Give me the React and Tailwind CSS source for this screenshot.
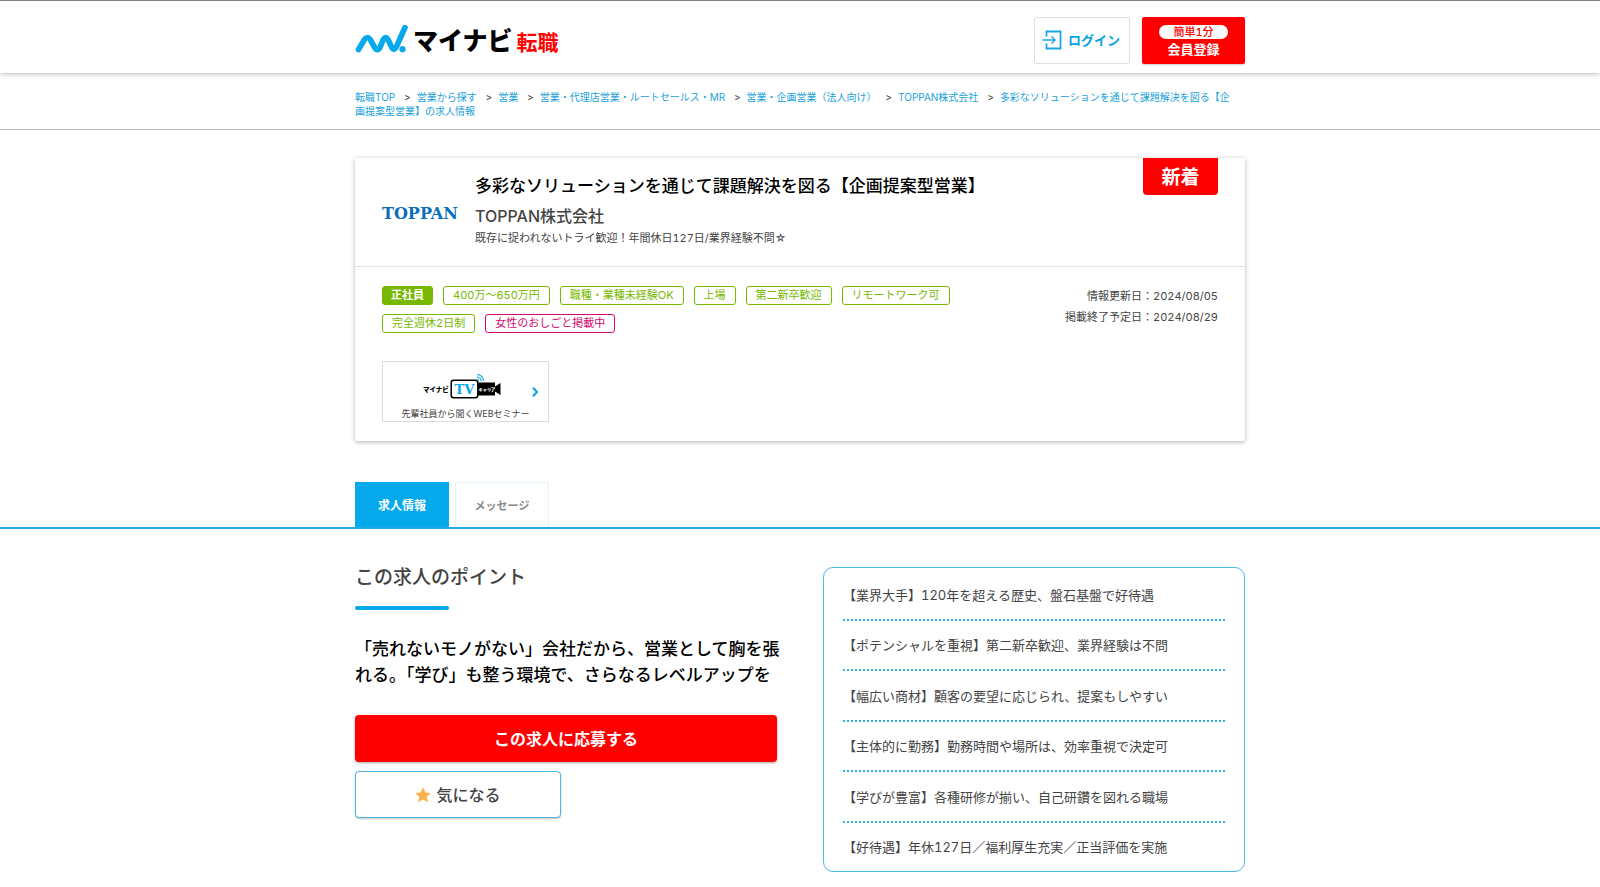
import React from "react";

const crumbs = [
  "転職TOP",
  "営業から探す",
  "営業",
  "営業・代理店営業・ルートセールス・MR",
  "営業・企画営業（法人向け）",
  "TOPPAN株式会社",
  "多彩なソリューションを通じて課題解決を図る【企画提案型営業】の求人情報",
];

const tags = ["400万～650万円", "職種・業種未経験OK", "上場", "第二新卒歓迎", "リモートワーク可", "完全週休2日制"];

const points = [
  "【業界大手】120年を超える歴史、盤石基盤で好待遇",
  "【ポテンシャルを重視】第二新卒歓迎、業界経験は不問",
  "【幅広い商材】顧客の要望に応じられ、提案もしやすい",
  "【主体的に勤務】勤務時間や場所は、効率重視で決定可",
  "【学びが豊富】各種研修が揃い、自己研鑽を図れる職場",
  "【好待遇】年休127日／福利厚生充実／正当評価を実施",
];

function Logo() {
  return (
    <a href="#" aria-label="マイナビ転職" className="flex items-center">
      <svg viewBox="0 2 54 30" className="h-[30px] w-[54px]" fill="none">
        <path
          d="M3.500 26.500L9.500 16.500Q12.500 12.500 15.200 16.500L20 25Q22.500 28.500 24.800 25L28 17Q30.500 12.500 33 16.500L37 25Q39.500 28 41.500 23.500L50 4.500"
          stroke="#08a9ec"
          strokeWidth="5.600"
          strokeLinecap="round"
          strokeLinejoin="round"
        />
        <circle cx="47.500" cy="26.200" r="3.100" fill="#08a9ec" />
      </svg>
      <span className="ml-1 pt-[2px] text-[25px] leading-8 font-black text-black">マイナビ</span>
      <span className="ml-1 pt-[6px] text-[21px] leading-7 font-bold text-[#ff0000]">転職</span>
    </a>
  );
}

function Header() {
  return (
    <header className="border-t border-[#808080] shadow-[0_1px_5px_rgba(0,0,0,0.28)]">
      <div className="mx-auto flex h-[72px] max-w-[890px] items-center justify-between pt-[6px]">
        <Logo />
        <div className="flex gap-3">
          <a href="#" className="flex h-[47px] w-[96px] items-center rounded-xs border border-[#dedede] pl-[7px] text-[13px] font-bold text-[#08a2e6]">
            <svg viewBox="0 0 20 20" className="mr-[6px] size-5" fill="none" stroke="#1ba8ea" strokeWidth="1.800">
              <path d="M4.500 6.500V1.500H18.500V18.500H4.500V13.500" />
              <path d="M0.500 10H12.500M9.500 6.500L13 10L9.500 13.500" strokeWidth="1.400" />
            </svg>
            <span className="pt-[2px]">ログイン</span>
          </a>
          <a href="#" className="flex h-[47px] w-[103px] flex-col items-center justify-center rounded-xs bg-[#ff0000] pt-[2px] text-[13px] leading-[18px] font-bold text-white shadow-[0_1px_2px_rgba(0,0,0,0.2)]">
            <span className="mb-px h-[14px] rounded-full bg-white px-[14px] text-[11px] leading-[14px] font-medium text-[#ff0000]">簡単1分</span>
            会員登録
          </a>
        </div>
      </div>
    </header>
  );
}

function Breadcrumb() {
  return (
    <nav aria-label="パンくずリスト" className="border-b border-[#bbbbbb]">
      <ol className="mx-auto max-w-[890px] pt-[17px] pr-3 pb-[11px] text-[10px] leading-[14px]">
        {crumbs.map((c, i) => (
          <li key={c} className="inline">
            {i > 0 && <span className="mr-[6px] ml-[9px] text-[#333333]">&gt;</span>}
            <a href="#" className="text-[#1a9fdb]">{c}</a>
          </li>
        ))}
      </ol>
    </nav>
  );
}

function SeminarLink() {
  return (
    <a href="#" className="relative mt-[28px] flex h-[61px] w-[167px] flex-col items-center border border-[#dcdcdc] pt-[10px] text-[9px] leading-[14px] text-[#444444]">
      <svg viewBox="0 0 86 28" className="h-[28px] w-[86px]">
        <text x="0" y="20" fontSize="6.500" fontWeight="900" fill="#000">マイナビ</text>
        <rect x="28.200" y="8.200" width="26.600" height="17.600" rx="2.500" fill="#fff" stroke="#000" strokeWidth="1.500" />
        <text x="41.500" y="21.500" fontSize="13" fontWeight="700" textAnchor="middle" fill="#08a9ec" className="font-['DejaVu_Serif',serif]">TV</text>
        <path d="M55 10.500H72V14.500L77.500 11V23L72 19.500V23.500H55Z" fill="#000" />
        <text x="55.500" y="18.500" fontSize="4.200" fontWeight="900" fill="#fff">キャリア</text>
        <g fill="none" stroke="#08a9ec" strokeWidth="1.200">
          <path d="M54 2.500A6.500 6.500 0 0 1 60.500 9M54 5A4 4 0 0 1 58 9" />
        </g>
        <circle cx="55" cy="8" r="1" fill="#08a9ec" />
      </svg>
      <span className="mt-[7px]">先輩社員から聞くWEBセミナー</span>
      <svg viewBox="0 0 6 10" className="absolute top-[25px] right-[10px] h-[10px] w-[6px]" fill="none" stroke="#08a2e6" strokeWidth="2">
        <path d="M1 0.800L5 5L1 9.200" />
      </svg>
    </a>
  );
}

function JobCard() {
  return (
    <section className="rounded-xs bg-white shadow-[0_1px_4px_rgba(0,0,0,0.32)]">
      <div className="relative flex items-center border-b border-[#e2e2e2] px-[27px] pt-[14px] pb-[19px]">
        <span className="w-[93px] shrink-0 pt-[9px] font-['DejaVu_Serif',serif] text-[16px] leading-6 font-bold text-[#0a6ebd]">TOPPAN</span>
        <div>
          <h1 className="text-[17px] leading-[28px] font-medium text-black">多彩なソリューションを通じて課題解決を図る【企画提案型営業】</h1>
          <p className="mt-[3px] text-[16px] leading-[26px] font-medium text-[#444444]">TOPPAN株式会社</p>
          <p className="text-[11px] leading-[18px] text-[#444444]">既存に捉われないトライ歓迎！年間休日127日/業界経験不問☆</p>
        </div>
        <span className="absolute top-0 right-[27px] flex h-[37px] w-[75px] items-center justify-center rounded-b-sm bg-[#ff0000] pt-[3px] text-[19px] font-bold text-white">新着</span>
      </div>
      <div className="px-[27px] pt-[19px] pb-[19px]">
        <div className="flex justify-between">
          <ul className="flex w-[600px] flex-wrap gap-x-[10px] gap-y-[9px] text-[11px] leading-[17px]">
            <li className="rounded-[3px] border border-[#76b900] bg-[#76b900] px-2 font-bold text-white">正社員</li>
            {tags.map((t) => (
              <li key={t} className="rounded-[3px] border border-[#76b900] px-[9px] text-[#76b900]">{t}</li>
            ))}
            <li className="rounded-[3px] border border-[#d9086e] px-[9px] text-[#d9086e]">女性のおしごと掲載中</li>
          </ul>
          <div className="text-right text-[11px] leading-[21px] text-[#444444]">
            <p>情報更新日：2024/08/05</p>
            <p>掲載終了予定日：2024/08/29</p>
          </div>
        </div>
        <SeminarLink />
      </div>
    </section>
  );
}

function Tabs() {
  return (
    <div className="mt-[41px] border-b-2 border-[#1aa9e6]">
      <div role="tablist" className="mx-auto flex max-w-[890px] gap-[6px] text-[12px]">
        <button role="tab" aria-selected="true" className="h-[45px] w-[94px] bg-[#05a9ec] pt-[2px] font-bold text-white">求人情報</button>
        <button role="tab" aria-selected="false" className="h-[45px] w-[94px] border border-b-0 border-[#e3f3f9] pt-[2px] text-[11px] font-bold text-[#8a8a8a]">メッセージ</button>
      </div>
    </div>
  );
}

function Points() {
  return (
    <section className="mx-auto grid max-w-[890px] grid-cols-2 gap-[46px] pt-[38px]">
      <div>
        <h2 className="text-[19px] leading-[22px] font-medium text-[#444444]">この求人のポイント</h2>
        <div className="mt-[17px] h-[4px] w-[94px] rounded-full bg-[#05a9ec]" />
        <p className="mt-[26px] -mr-1 text-[17px] leading-[26px] font-medium text-black">
          「売れないモノがない」会社だから、営業として胸を張れる。「学び」も整う環境で、さらなるレベルアップを
        </p>
        <button className="mt-[27px] block h-[47px] w-full rounded bg-[#ff0000] text-[16px] font-bold text-white shadow-[0_1px_3px_rgba(0,0,0,0.35)]">この求人に応募する</button>
        <button className="mt-[9px] flex h-[47px] w-[206px] items-center justify-center gap-[5px] rounded border border-[#4cb4e7] bg-white text-[16px] font-medium text-[#444444] shadow-[0_1px_2px_rgba(0,0,0,0.25)]">
          <svg viewBox="0 0 24 24" className="size-4" fill="#ffb048">
            <path d="M12 0.500L15.500 8.200L23.800 9.100L17.600 14.700L19.400 23L12 18.800L4.600 23L6.400 14.700L0.200 9.100L8.500 8.200Z" />
          </svg>
          気になる
        </button>
      </div>
      <ul className="flex min-h-[305px] flex-col self-start rounded-[10px] border border-[#4cbaeb] px-[19px] pt-[2px] text-[13px] leading-5 text-[#444444]">
        {points.map((p) => (
          <li key={p} className="flex flex-1 items-center border-b-2 border-dotted border-[#35b0ea] pt-px last:border-0">{p}</li>
        ))}
      </ul>
    </section>
  );
}

export default function App() {
  return (
    <div lang="ja" className="min-h-screen bg-white pb-3 font-['Inter','Noto_Sans_CJK_JP',sans-serif] text-[#444444] tabular-nums">
      <Header />
      <Breadcrumb />
      <main className="pt-7">
        <div className="mx-auto max-w-[890px]">
          <JobCard />
        </div>
        <Tabs />
        <Points />
      </main>
    </div>
  );
}
